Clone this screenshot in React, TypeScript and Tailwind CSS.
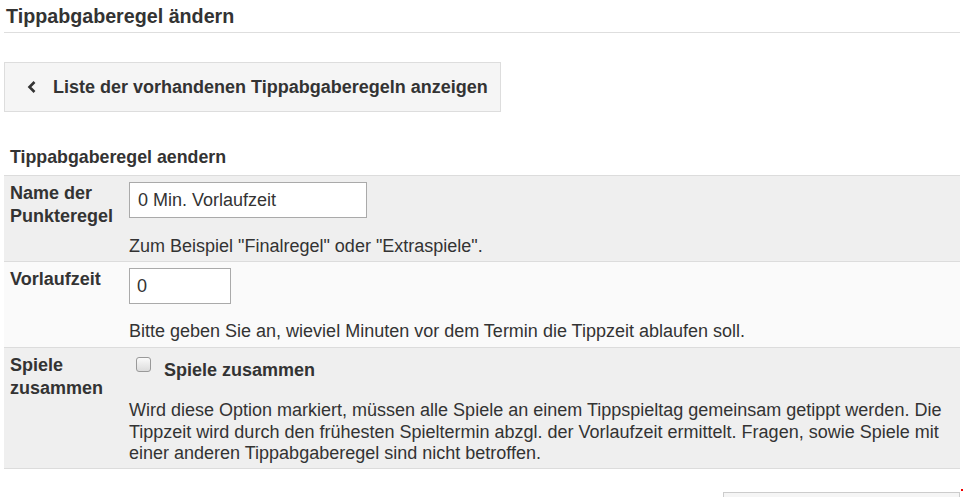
import React from "react";

const font = "[font-family:'Liberation_Sans',Arial,sans-serif]";

function Row({
  label,
  bg,
  children,
}: {
  label: React.ReactNode;
  bg: string;
  children: React.ReactNode;
}) {
  return (
    <div className={`grid grid-cols-[125px_1fr] border-t border-[#dcdcdc] ${bg}`}>
      <div className="pl-[6px] pt-[6px] text-[18px] font-bold leading-[23px] text-[#333]">{label}</div>
      <div className="pt-[6px] pr-2">{children}</div>
    </div>
  );
}

export default function App() {
  return (
    <div className={`${font} w-[965px] h-[497px] overflow-hidden bg-white text-[#333]`}>
      <div className="ml-[4px] mr-[5px]">
        <h1 className="pt-[5px] pb-[4px] pl-[2px] text-[19.7px] font-bold leading-[23px] border-b border-[#dedede]">
          Tippabgaberegel ändern
        </h1>

        <div className="mt-[29px] w-[497px] h-[50px] flex items-center gap-[16px] pl-[22px] bg-[#f5f5f5] border border-[#dddddd] text-[18px] font-bold">
          <svg width="10" height="14" viewBox="0 0 10 14" className="mt-[-1px]">
            <path d="M7.5 2 L2.5 7 L7.5 12" fill="none" stroke="#333" strokeWidth="2.6" />
          </svg>
          <span>Liste der vorhandenen Tippabgaberegeln anzeigen</span>
        </div>

        <div className="mt-[35px] pl-[6px] pb-[7px] text-[17.8px] font-bold leading-[21px]">
          Tippabgaberegel aendern
        </div>

        <div className="border-b border-[#dcdcdc]">
          <Row
            bg="bg-[#efefef]"
            label={
              <>
                Name der
                <br />
                Punkteregel
              </>
            }
          >
            <input
              readOnly
              value="0 Min. Vorlaufzeit"
              className="block w-[238px] h-[36px] px-[8px] text-[18px] text-[#333] bg-white border border-[#aaa] outline-none"
            />
            <p className="mt-[18px] pb-[4px] text-[18px] leading-[21px]">
              Zum Beispiel "Finalregel" oder "Extraspiele".
            </p>
          </Row>
          <Row bg="bg-[#fafafa]" label="Vorlaufzeit">
            <input
              readOnly
              value="0"
              className="block w-[102px] h-[36px] px-[7px] text-[18px] text-[#333] bg-white border border-[#aaa] outline-none"
            />
            <p className="mt-[17px] pb-[5px] text-[18px] leading-[21px]">
              Bitte geben Sie an, wieviel Minuten vor dem Termin die Tippzeit ablaufen soll.
            </p>
          </Row>
          <Row
            bg="bg-[#efefef]"
            label={
              <>
                Spiele
                <br />
                zusammen
              </>
            }
          >
            <label className="flex items-start gap-[13px] pl-[7px] h-[46px]">
              <span className="block w-[15px] h-[15px] mt-[3px] rounded-[3px] border border-[#999] bg-gradient-to-b from-[#fafafa] to-[#dcdcdc]" />
              <span className="mt-[5px] text-[18px] font-bold leading-[22px]">Spiele zusammen</span>
            </label>
            <p className="pb-[3px] text-[18px] leading-[21.5px]">
              Wird diese Option markiert, müssen alle Spiele an einem Tippspieltag gemeinsam getippt werden. Die
              Tippzeit wird durch den frühesten Spieltermin abzgl. der Vorlaufzeit ermittelt. Fragen, sowie Spiele mit
              einer anderen Tippabgaberegel sind nicht betroffen.
            </p>
          </Row>
        </div>

        <div className="flex justify-end mt-[23px] relative">
          <div className="w-[237px] h-[30px] border border-[#ccc] bg-[#f5f5f5]" />
          <span className="absolute right-[-3px] top-[-3px] w-[2px] h-[2px] bg-[#e00]" />
        </div>
      </div>
    </div>
  );
}
